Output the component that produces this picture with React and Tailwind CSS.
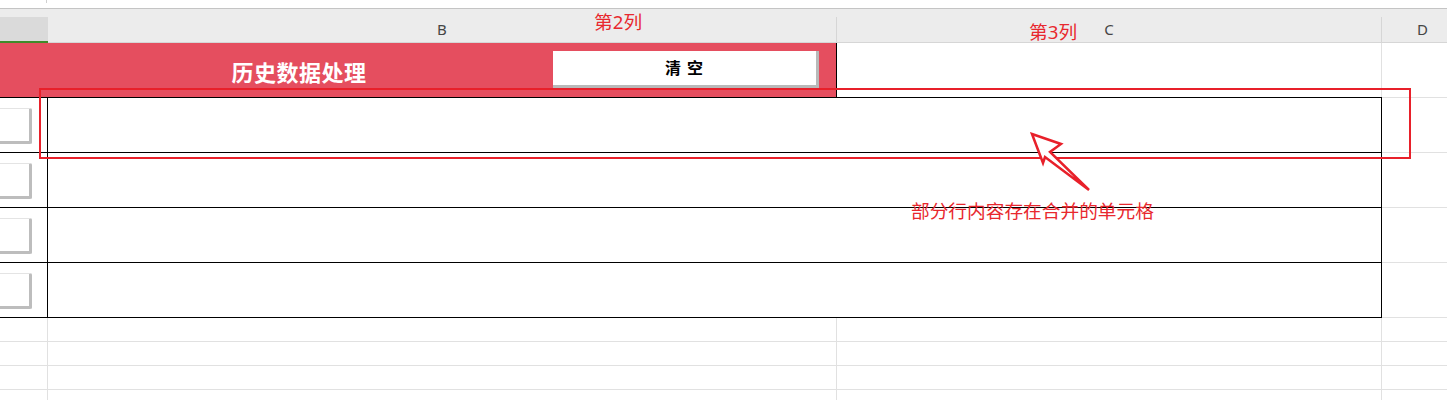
const font = { fontFamily: '"Noto Sans", "Noto Sans CJK SC", sans-serif' };

const SideButton = () => (
  <div className="mt-[10px] h-[36px] w-[32px] rounded-tr-[2px] rounded-br-[2px] border-t border-t-[#e4e4e4] border-r-[3px] border-r-[#bdbdbd] border-b-[3px] border-b-[#bdbdbd] bg-white" />
);

const TableRow = () => (
  <div className="flex h-[55px]">
    <div className="flex w-[1382px] border-t border-black">
      <div className="w-[48px] border-r border-black">
        <SideButton />
      </div>
      <div className="flex-1 border-r border-black" />
    </div>
    <div className="flex-1 border-t border-[#e1e1e1]" />
  </div>
);

const GridRow = () => (
  <div className="flex h-[24px] border-b border-[#e1e1e1]">
    <div className="w-[48px] border-r border-[#e1e1e1]" />
    <div className="w-[789px] border-r border-[#e1e1e1]" />
    <div className="w-[545px] border-r border-[#e1e1e1]" />
    <div className="flex-1" />
  </div>
);

export default function App() {
  return (
    <div className="relative h-[400px] w-[1447px] overflow-hidden bg-white" style={font}>
      {/* top strip */}
      <div className="h-[9px] border-b border-[#c4c4c4]">
        <div className="ml-[46px] h-[3px] w-px bg-[#d0d0d0]" />
      </div>

      {/* column header */}
      <div className="flex h-[34px] bg-[#ececec] text-[15px] text-[#454545]">
        <div className="w-[48px] pt-[8px]">
          <div className="h-[26px] border-b-2 border-[#3f8a2a] bg-[#dadada]" />
        </div>
        <div className="flex w-[788px] items-center justify-center border-b border-[#d6d6d6] pt-[8px]">B</div>
        <div className="flex w-[545px] border-b border-[#d6d6d6] pt-[8px]">
          <div className="flex flex-1 items-center justify-center border-l border-[#d6d6d6]">C</div>
        </div>
        <div className="flex flex-1 border-b border-[#d6d6d6] pt-[8px]">
          <div className="flex flex-1 items-center border-l border-[#d6d6d6] pl-[35px]">D</div>
        </div>
      </div>

      {/* row 1 : title band */}
      <div className="flex h-[54px]">
        <div className="flex w-[837px] border-r border-black bg-[#e54e5f]">
          <div className="w-[553px] pl-[45px] pt-[13px] text-center text-[22px] font-bold tracking-[0.5px] text-white">
            历史数据处理
          </div>
          <button className="mt-[8px] h-[37px] w-[266px] border-r-[3px] border-b-[3px] border-[#b9b9b9] bg-white text-[16px] font-bold tracking-[1px] text-black">
            清 空
          </button>
        </div>
        <div className="w-[545px] border-r border-[#e1e1e1]" />
        <div className="flex-1" />
      </div>

      {/* merged rows */}
      <div className="flex flex-col">
        <TableRow />
        <TableRow />
        <TableRow />
        <TableRow />
        <div className="flex">
          <div className="w-[1382px] border-t border-black" />
          <div className="flex-1 border-t border-[#e1e1e1]" />
        </div>
      </div>

      {/* empty grid */}
      <GridRow />
      <GridRow />
      <GridRow />
      <GridRow />

      {/* annotations */}
      <div className="absolute left-[594px] top-[8px] text-[18.7px] text-[#e8282e]">第2列</div>
      <div className="absolute left-[1029px] top-[18px] text-[18.7px] text-[#e8282e]">第3列</div>
      <div className="absolute left-[39px] top-[88px] h-[71px] w-[1372px] border-2 border-[#e8202a]" />
      <svg className="absolute left-0 top-0" width="1447" height="400">
        <polygon
          points="1032,134 1061,144 1050,152 1089,190 1045,157 1043,163"
          fill="white"
          stroke="#e8202a"
          strokeWidth="2.5"
          strokeLinejoin="miter"
        />
      </svg>
      <div className="absolute left-[911px] top-[197px] text-[18.7px] text-[#e8282e]">部分行内容存在合并的单元格</div>
    </div>
  );
}
